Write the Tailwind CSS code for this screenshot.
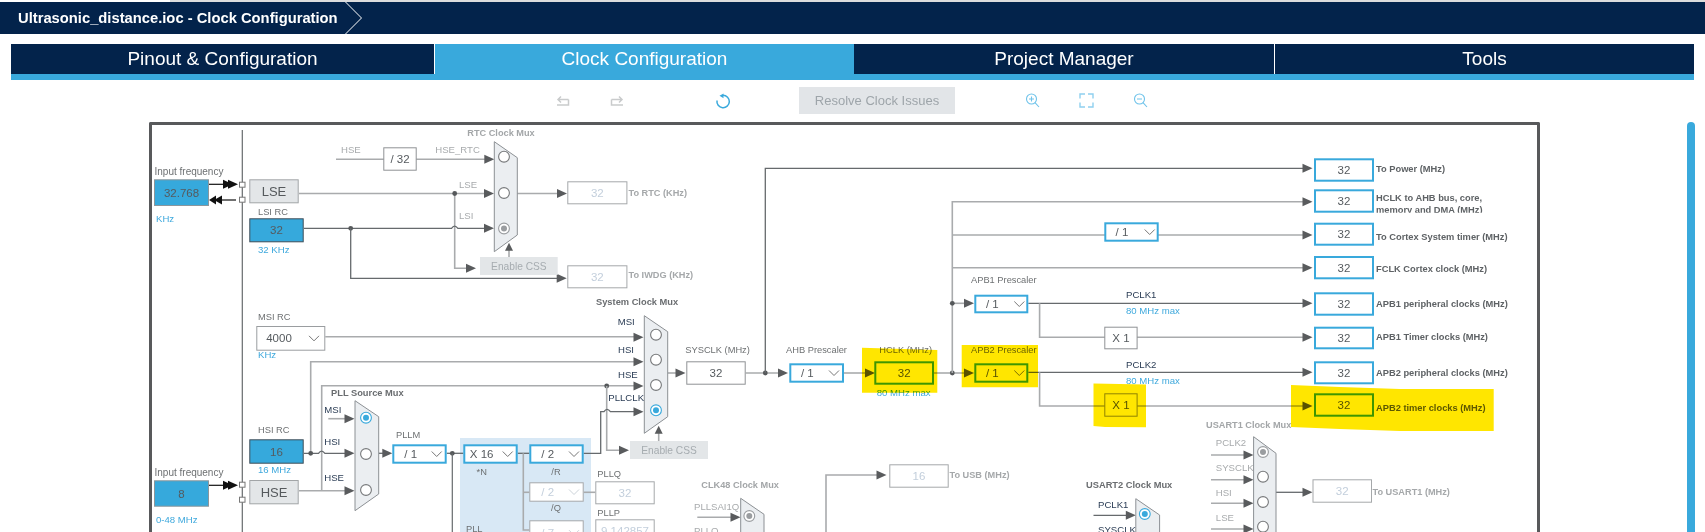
<!DOCTYPE html>
<html lang="en">
<head>
<meta charset="UTF-8">
<title>Ultrasonic_distance.ioc - Clock Configuration</title>
<script src="https://cdn.jsdelivr.net/npm/@tailwindcss/browser@4"></script>
</head>
<body class="bg-white h-[532px] overflow-hidden font-['Liberation_Sans',Arial,sans-serif]">
  <!-- title bar -->
  <div class="h-[2px] ml-[170px] bg-[#dcdcdc]"></div>
  <div class="flex h-[32px] bg-[#03234b] text-white">
    <div class="w-[345px] pl-[18px] flex items-center text-[14.75px] font-bold whitespace-nowrap">Ultrasonic_distance.ioc - Clock Configuration</div>
    <svg class="w-[20px] h-[32px]" viewBox="0 0 20 32" fill="none" stroke="white" stroke-width="1"><path d="M0.5 0L16.5 16L0.5 32"/></svg>
  </div>

  <!-- main tabs -->
  <div class="mx-[11px] mt-[10px] w-[1683px] border-b-[6px] border-[#39a9dc] flex h-[36px] text-white text-[19px]">
    <div class="w-[423px] bg-[#03234b] flex items-center justify-center">Pinout &amp; Configuration</div>
    <div class="w-[420px] bg-[#39a9dc] border-l border-white flex items-center justify-center">Clock Configuration</div>
    <div class="w-[420px] bg-[#03234b] flex items-center justify-center">Project Manager</div>
    <div class="flex-1 bg-[#03234b] border-l border-white flex items-center justify-center">Tools</div>
  </div>

  <!-- toolbar -->
  <div class="flex items-center h-[42px] pb-[1px]">
    <svg class="ml-[556px] w-[14px] h-[14px]" viewBox="0 0 14 14" fill="none" stroke="#c9cbcc" stroke-width="1.5"><path d="M12.5 5.5H2M5 2.5L2 5.5L5 8.5M12.5 5.5V11H1"/></svg>
    <svg class="ml-[40px] w-[14px] h-[14px]" viewBox="0 0 14 14" fill="none" stroke="#c9cbcc" stroke-width="1.5"><path d="M1.5 5.5H12M9 2.5L12 5.5L9 8.5M1.5 5.5V11H13"/></svg>
    <svg class="ml-[91px] w-[16px] h-[16px]" viewBox="0 0 16 16" fill="none" stroke="#39a9dc" stroke-width="1.5"><path d="M8 2.3A6.2 6.2 0 1 1 2 7.5"/><polygon points="4.5,2.8 8.5,0.5 8.5,5.2" fill="#39a9dc" stroke="none"/></svg>
    <div class="ml-[68px] w-[156px] h-[27px] bg-[#e2e5e8] text-[#9ea5aa] text-[13px] flex items-center justify-center">Resolve Clock Issues</div>
    <svg class="ml-[70px] w-[15px] h-[15px]" viewBox="0 0 15 15" fill="none" stroke="#6fc3ea" stroke-width="1.1"><circle cx="6.5" cy="6" r="5"/><path d="M10 9.6L14 14M6.5 3.5V8.5M4 6H9"/></svg>
    <svg class="ml-[39px] w-[15px] h-[15px]" viewBox="0 0 15 15" fill="none" stroke="#8fd0ef" stroke-width="1.4"><path d="M6 1H1V5.5M9 1H14V5.5M6 14H1V9.5M9 14H14V9.5"/></svg>
    <svg class="ml-[39px] w-[15px] h-[15px]" viewBox="0 0 15 15" fill="none" stroke="#6fc3ea" stroke-width="1.1"><circle cx="6.5" cy="6" r="5"/><path d="M10 9.6L14 14M4 6H9"/></svg>
  </div>

  <!-- diagram and scrollbar -->
  <div class="flex">
    <div class="ml-[149px] w-[1391px] h-[410px] border-[3px] border-b-0 border-[#58595b] rounded-t-[2px]">
      <svg id="diagram" class="block" width="1385" height="407" viewBox="152 125 1385 407"></svg>
    </div>
    <div class="ml-[147px] w-[8px] h-[410px] bg-[#39a9dc] rounded-t-[4px]"></div>
  </div>

  <script>
    const DARK = '#666a6d', LIGHT = '#a9abad';
    let out = '<rect x="152" y="125" width="1385" height="407" fill="white"/>';

    const wire = (d, c = LIGHT, w = c === DARK ? 1.3 : 1.6) => { out += `<path d="${d}" fill="none" stroke="${c}" stroke-width="${w}"/>`; };
    const arrow = (x, y, c = '#595b5d') => { out += `<polygon points="${x},${y} ${x - 10},${y - 4.5} ${x - 10},${y + 4.5}" fill="${c}"/>`; };
    const arrowUp = (x, y) => { out += `<polygon points="${x},${y} ${x - 4},${y + 8} ${x + 4},${y + 8}" fill="#595b5d"/>`; };
    const dot = (x, y) => { out += `<circle cx="${x}" cy="${y}" r="2.4" fill="#55585a"/>`; };
    const rect = (x1, y1, x2, y2, fill, stroke, w = 1) => {
      out += `<rect x="${x1 + w / 2}" y="${y1 + w / 2}" width="${x2 - x1 - w}" height="${y2 - y1 - w}" fill="${fill}" stroke="${stroke}" stroke-width="${w}"/>`;
    };
    const text = (x, y, s, cls, anchor = 'start') => {
      out += `<text x="${x}" y="${y}" dominant-baseline="central" text-anchor="${anchor}" class="${cls}">${s}</text>`;
    };
    const box = (x1, y1, x2, y2, s, fill, stroke, w, cls) => {
      rect(x1, y1, x2, y2, fill, stroke, w);
      text((x1 + x2) / 2, (y1 + y2) / 2, s, cls, 'middle');
    };
    const dropdown = (x1, y1, x2, y2, s, tx, cx, stroke, w, cls = VALUE) => {
      rect(x1, y1, x2, y2, 'white', stroke, w);
      text(tx, (y1 + y2) / 2, s, cls, 'middle');
      const cy = (y1 + y2) / 2;
      out += `<path d="M${cx - 5} ${cy - 2.5}L${cx} ${cy + 2.5}L${cx + 5} ${cy - 2.5}" fill="none" stroke="${cls === OFF ? '#ccd3d9' : '#777'}" stroke-width="1"/>`;
    };
    const mux = (x1, y1, x2, y2, y3, y4, color = '#8c9094') => {
      out += `<polygon points="${x1},${y1} ${x2},${y2} ${x2},${y3} ${x1},${y4}" fill="#ebeef1" stroke="${color}" stroke-width="1"/>`;
    };
    const radio = (x, y, sel) => {
      out += `<circle cx="${x}" cy="${y}" r="5.4" fill="white" stroke="${sel === 'blue' ? '#39a9dc' : sel === 'gray' ? '#9a9da0' : '#77797b'}" stroke-width="1.1"/>`;
      if (sel) out += `<circle cx="${x}" cy="${y}" r="3" fill="${sel === 'blue' ? '#39a9dc' : '#9a9da0'}"/>`;
    };

    // text styles
    const VALUE = 'text-[11.5px] fill-[#555a5e]';
    const OFF = 'text-[11.5px] fill-[#c3cfdc]';
    const LABEL = 'text-[9.3px] fill-[#6d7072]';
    const DIM = 'text-[9.6px] fill-[#a8abad]';
    const NAVY = 'text-[9.6px] fill-[#2b3d55]';
    const BLUE = 'text-[9.6px] fill-[#3fa9dd]';
    const TITLE = 'text-[9.3px] font-bold fill-[#6a6d70]';
    const TITLE_DIM = 'text-[9.2px] font-bold fill-[#a3a6a8]';
    const OUT = 'text-[9.3px] font-bold fill-[#5e6265]';
    const OUT_DIM = 'text-[9.2px] font-bold fill-[#a5a8aa]';
    const CHIP = 'text-[10.2px] fill-[#a6acb0]';
    const SRC = 'text-[13px] fill-[#55595c]';
    const IN_BLUE = '#36a9dc', ON = '#39a9dc', GREEN = '#3ea60f';

    // PLL panel
    rect(460, 438, 591, 532, '#d8e8f5', 'none', 0);

    // bus line at the left
    wire('M242.3 130V532', DARK, 1.2);

    // external clock pins
    wire('M209 184.3H226', '#111', 1.2);
    wire('M222 200H236', '#111', 1.2);
    arrow(233, 184.3, '#111'); arrow(238, 184.3, '#111');
    out += '<polygon points="209,200 216,195.5 216,204.5" fill="#111"/><polygon points="214,200 222,195.5 222,204.5" fill="#111"/>';
    wire('M209 485.3H226', '#111', 1.2);
    arrow(233, 485.3, '#111'); arrow(238, 485.3, '#111');

    // RTC section
    wire('M336 159.3H486');
    arrow(494.3, 159.3);
    wire('M299 193.5H485');
    arrow(494, 193.5);
    wire('M454.7 193.5V268.3H467');
    arrow(476, 268.3);
    dot(454.7, 193.5);
    wire('M304 228.3H451.5q3 -4.5 6.4 0H485', DARK);
    arrow(494, 228.3);
    dot(350.7, 228.3);
    wire('M350.7 228.3V278.3H558', DARK);
    arrow(566.7, 278.3);
    wire('M517 193.5H558');
    arrow(567, 193.5);
    wire('M509 257V248');
    arrowUp(509, 242.7);

    // system clock sources
    wire('M325.3 336.7H635');
    arrow(643.5, 337.3);
    wire('M310.7 453.3V361.7H635');
    arrow(643.5, 361.7);
    wire('M321.7 490.7V385.7H635');
    arrow(643.5, 386);
    dot(606.7, 386);
    wire('M606.7 386V450.3H620');
    arrow(629, 450.3);
    wire('M658.7 441V432');
    arrowUp(658.7, 425.7);

    // PLL
    wire('M304 453.3H318.5q3 -4.5 6.4 0H346', DARK);
    arrow(354.5, 453.3);
    dot(310.7, 453.3);
    wire('M299 490.7H346');
    arrow(354.5, 490.7);
    wire('M328.3 418.7H346');
    arrow(354.5, 418.7);
    wire('M378.7 453.3H384', DARK);
    arrow(392.3, 453.3);
    wire('M446.7 453.3H463.3', DARK);
    dot(452.3, 453.3);
    wire('M452.3 453.3V532', DARK, 1.2);
    wire('M517.7 453.3H529.3', DARK);
    wire('M523.3 453.3V530H529.3');
    wire('M523.3 492.3H529.3');
    wire('M583.7 453.3H600.7V411.7H604q3 -4.5 6.4 0H635', DARK);
    arrow(643.5, 411.7);
    wire('M583.7 492.3H595.3');

    // system clock to the AHB tree
    wire('M667.7 373H676');
    arrow(685.5, 373);
    wire('M745.7 373H779');
    dot(765.3, 373);
    arrow(788, 373);
    wire('M765.3 373V168.3H1303', DARK);
    arrow(1312.5, 168.3);
    wire('M844 373H866');
    arrow(875, 373);
    wire('M934 373H965');
    dot(952.3, 373);
    arrow(974, 373);
    wire('M952.3 373V201.7H1303');
    arrow(1312.5, 201.7);
    wire('M952.3 235H1303');
    arrow(1312.5, 235);
    wire('M952.3 267.7H1303');
    arrow(1312.5, 267.7);
    wire('M952.3 303.3H965');
    dot(952.3, 303.3);
    arrow(974, 303.3);

    // APB branches
    wire('M1028.3 303.3H1303', DARK);
    arrow(1312.5, 303.3);
    wire('M1039.6 303.3V337.3H1303');
    arrow(1312.5, 337.3);
    wire('M1028.3 372.3H1303', DARK);
    arrow(1312.5, 372.3);
    wire('M1039.6 372.3V406H1303');
    arrow(1312.5, 406);

    // lower part
    wire('M826 532V475H878');
    arrow(886.5, 475);
    wire('M697.3 517.3H732');
    arrow(740.5, 517.3);
    wire('M1211 455H1245'); arrow(1253.5, 455);
    wire('M1211 479.7H1245'); arrow(1253.5, 479.7);
    wire('M1211 503.3H1245'); arrow(1253.5, 503.3);
    wire('M1211 529H1245'); arrow(1253.5, 529);
    wire('M1276 492.3H1304', DARK); arrow(1312.5, 492.3);
    wire('M1093.5 515.3H1127', DARK); arrow(1135.8, 515.3);

    // pin squares
    [[239, 181.7], [239, 196.7], [239, 481.7], [239, 496.7]].forEach(([x, y]) => rect(x, y, x + 6.5, y + 6, 'white', '#777'));

    // muxes
    mux(494.3, 141.7, 517.3, 157.7, 235, 251.7);
    radio(504, 156.7); radio(504, 193); radio(504, 228.5, 'gray');
    mux(355, 400.7, 378.7, 416.7, 494, 510.7);
    radio(366, 417.7, 'blue'); radio(366, 454); radio(366, 490);
    mux(644.3, 315.7, 667.7, 331.7, 416.7, 433.3);
    radio(656, 334.7); radio(656, 359.7); radio(656, 385); radio(656, 410.3, 'blue');
    mux(740.7, 498.3, 764, 514.3, 600, 620);
    radio(749.3, 516, 'gray');
    mux(1253.6, 436.7, 1276, 453.3, 600, 620);
    radio(1263, 452, 'gray'); radio(1263, 476.7); radio(1263, 502); radio(1263, 526.7);
    mux(1135.8, 498.7, 1159.6, 515, 600, 620);
    radio(1144.8, 514, 'blue');

    // sources
    box(154, 179.3, 209, 206, '32.768', IN_BLUE, '#8b969c', 1, VALUE);
    box(154, 480.3, 209, 506.7, '8', IN_BLUE, '#8b969c', 1, VALUE);
    box(249.3, 179.3, 298.7, 203.3, 'LSE', '#e3e6e8', '#a2a5a7', 1, SRC);
    box(249.3, 480, 298.7, 504.3, 'HSE', '#e3e6e8', '#a2a5a7', 1, SRC);
    box(249.3, 218.3, 303.7, 242.3, '32', IN_BLUE, '#3f4d58', 1, VALUE);
    box(249.3, 439.3, 303.7, 463.7, '16', IN_BLUE, '#3f4d58', 1, VALUE);
    box(383.3, 147.3, 416.7, 170.7, '/ 32', 'white', '#8f9295', 1, VALUE);
    box(567.3, 181.3, 627.4, 204.3, '32', 'white', '#a5a8aa', 1, OFF);
    box(567.3, 265.3, 627.4, 288.3, '32', 'white', '#a5a8aa', 1, OFF);
    box(480, 257, 557.7, 275, 'Enable CSS', '#e3e6e8', 'none', 0, CHIP);
    box(630, 441, 708, 459, 'Enable CSS', '#e3e6e8', 'none', 0, CHIP);
    box(595.3, 481.3, 654.7, 504.3, '32', 'white', '#a5a8aa', 1, OFF);
    box(595.3, 519.3, 654.7, 542, '9.142857', 'white', '#a5a8aa', 1, OFF);
    box(686.3, 361.3, 745.7, 384.7, '32', 'white', '#8f9295', 1, VALUE);
    box(889.3, 464.3, 948.7, 487.7, '16', 'white', '#a5a8aa', 1, OFF);
    box(1312.5, 479.3, 1372, 502.7, '32', 'white', '#a5a8aa', 1, OFF);
    box(874.3, 361.3, 934, 384.7, '32', 'white', GREEN, 2, VALUE);
    box(1104.3, 326.7, 1137.6, 349.3, 'X 1', 'white', '#8f9295', 1, VALUE);
    box(1104.3, 393.3, 1137.6, 416.7, 'X 1', 'white', '#8f9295', 1, VALUE);

    dropdown(256.3, 326, 325.3, 350.7, '4000', 279, 314, '#9a9da0', 1);
    dropdown(392.3, 444.3, 446.7, 463.7, '/ 1', 410.7, 436.7, ON, 2);
    dropdown(463.3, 444.3, 517.7, 463.7, 'X 16', 481.7, 507.7, ON, 2);
    dropdown(529.3, 444.3, 583.7, 463.7, '/ 2', 547.7, 574, ON, 2);
    dropdown(529.3, 482.3, 583.7, 501.7, '/ 2', 547.7, 574, '#a5a8aa', 1, OFF);
    dropdown(529.3, 520.3, 583.7, 545, '/ 7', 547.7, 574, '#a5a8aa', 1, OFF);
    dropdown(789.3, 363.3, 844, 382.7, '/ 1', 807.3, 834, ON, 2);
    dropdown(974.3, 294.7, 1028.3, 313.3, '/ 1', 992.3, 1019.3, ON, 2);
    dropdown(974.3, 363.3, 1028.3, 382.7, '/ 1', 992.3, 1019.3, GREEN, 2);
    dropdown(1104.3, 222.3, 1158.7, 241.7, '/ 1', 1122, 1149.7, ON, 2);

    // output boxes with their captions
    [[158.3, 181.7, 'To Power (MHz)', 169.3],
     [189.3, 212.7, 'HCLK to AHB bus, core,', 198],
     [222.7, 245.7, 'To Cortex System timer (MHz)', 236.7],
     [256, 279.3, 'FCLK Cortex clock (MHz)', 269.3],
     [292.3, 315.7, 'APB1 peripheral clocks (MHz)', 304],
     [326.7, 349.3, 'APB1 Timer clocks (MHz)', 336.7],
     [361.3, 384.3, 'APB2 peripheral clocks (MHz)', 372.7],
     [393.3, 416.7, 'APB2 timer clocks (MHz)', 407.7]].forEach(([y1, y2, s, ty], i) => {
      box(1314, y1, 1374, y2, '32', 'white', i === 7 ? GREEN : ON, 2, VALUE);
      text(1376, ty, s, OUT);
    });
    out += '<clipPath id="hclk-clip"><rect x="1376" y="200" width="200" height="12.7"/></clipPath>';
    out += `<g clip-path="url(#hclk-clip)"><text x="1376" y="210.3" dominant-baseline="central" class="${OUT}">memory and DMA (MHz)</text></g>`;

    // labels
    text(154.5, 171.7, 'Input frequency', 'text-[10px] fill-[#6d7072]');
    text(154.5, 472.7, 'Input frequency', 'text-[10px] fill-[#6d7072]');
    text(156, 218.7, 'KHz', BLUE);
    text(156, 519.3, '0-48 MHz', BLUE);
    text(258, 211.7, 'LSI RC', LABEL);
    text(258, 249.7, '32 KHz', BLUE);
    text(258, 316.7, 'MSI RC', LABEL);
    text(258, 354.7, 'KHz', BLUE);
    text(258, 429.7, 'HSI RC', LABEL);
    text(258, 469.3, '16 MHz', BLUE);
    text(467.3, 133.3, 'RTC Clock Mux', TITLE_DIM);
    text(341, 149.3, 'HSE', DIM);
    text(435.3, 149.3, 'HSE_RTC', DIM);
    text(459, 184.3, 'LSE', DIM);
    text(459, 215.3, 'LSI', DIM);
    text(628.5, 193, 'To RTC (KHz)', OUT_DIM);
    text(628.5, 274.5, 'To IWDG (KHz)', OUT_DIM);
    text(331, 392.7, 'PLL Source Mux', TITLE);
    text(324.3, 409.3, 'MSI', NAVY);
    text(324.3, 441.7, 'HSI', NAVY);
    text(324.3, 477.3, 'HSE', NAVY);
    text(396, 435.3, 'PLLM', LABEL);
    text(481.7, 472.3, '*N', LABEL, 'middle');
    text(556, 472.3, '/R', LABEL, 'middle');
    text(556, 507.7, '/Q', LABEL, 'middle');
    text(466, 529, 'PLL', LABEL);
    text(597.3, 474.3, 'PLLQ', LABEL);
    text(597.3, 513.3, 'PLLP', LABEL);
    text(596, 301.7, 'System Clock Mux', TITLE);
    text(617.7, 321.7, 'MSI', NAVY);
    text(618, 349.7, 'HSI', NAVY);
    text(618, 374.3, 'HSE', NAVY);
    text(608.3, 397.3, 'PLLCLK', NAVY);
    text(685.3, 349.7, 'SYSCLK (MHz)', LABEL);
    text(786, 349.7, 'AHB Prescaler', LABEL);
    text(879.3, 349.7, 'HCLK (MHz)', LABEL);
    text(876.7, 392.7, '80 MHz max', BLUE);
    text(971, 279.5, 'APB1 Prescaler', LABEL);
    text(971, 349.7, 'APB2 Prescaler', LABEL);
    text(1126, 294.7, 'PCLK1', NAVY);
    text(1126, 310, '80 MHz max', BLUE);
    text(1126, 364.3, 'PCLK2', NAVY);
    text(1126, 380, '80 MHz max', BLUE);
    text(949.5, 474.7, 'To USB (MHz)', OUT_DIM);
    text(701.3, 484.7, 'CLK48 Clock Mux', TITLE_DIM);
    text(694, 506.7, 'PLLSAI1Q', DIM);
    text(694, 530.5, 'PLLQ', DIM);
    text(1206, 424.7, 'USART1 Clock Mux', TITLE_DIM);
    text(1215.8, 442.7, 'PCLK2', DIM);
    text(1215.8, 467.3, 'SYSCLK', DIM);
    text(1215.8, 492.3, 'HSI', DIM);
    text(1215.8, 517.7, 'LSE', DIM);
    text(1372.5, 491.7, 'To USART1 (MHz)', OUT_DIM);
    text(1086, 485, 'USART2 Clock Mux', TITLE);
    text(1098, 504.7, 'PCLK1', NAVY);
    text(1098, 529, 'SYSCLK', NAVY);

    // yellow highlighter marks, painted over everything
    const mark = (pts) => { out += `<polygon points="${pts}" fill="#ffe600" class="mix-blend-multiply"/>`; };
    mark('862,347.7 937.3,350 937.3,392.7 862,392.7');
    mark('961.7,345 1038,345 1038,387.3 961.7,387.3');
    mark('1093.5,383.5 1146,384.5 1146,427.3 1105,427 1093.5,426');
    mark('1291,385 1340,387 1400,389 1493.7,389 1493.7,431 1400,431 1340,429 1291,427');

    document.getElementById('diagram').innerHTML = out;
  </script>
</body>
</html>
